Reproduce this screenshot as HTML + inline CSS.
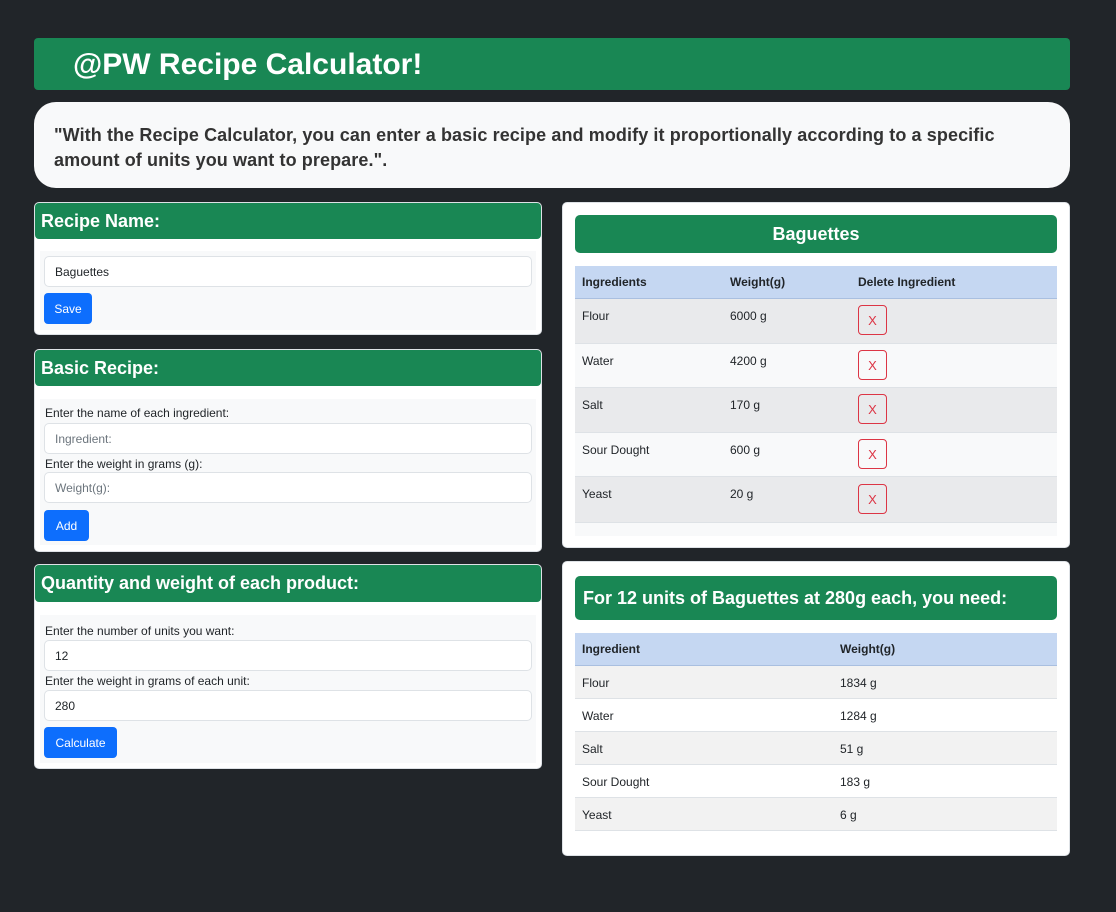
<!DOCTYPE html>
<html><head><meta charset="utf-8"><style>
*{box-sizing:border-box;margin:0;padding:0}
body{width:1116px;height:912px;background:#212529;font-family:"Liberation Sans",sans-serif;color:#212529;position:relative;overflow:hidden}
.a{position:absolute}
.green{background:#198754;color:#fff;font-weight:bold}
.card{position:absolute;background:#fff;border:1px solid #dee2e6;border-radius:5px}
.hdr{position:absolute;left:0;right:0;top:0;border-radius:4px;font-size:18px;padding-left:6px;display:flex;align-items:center}
.body{position:absolute;left:5px;right:5px;background:#f8f9fa}
.inp{position:absolute;left:9px;right:9px;height:31px;background:#fff;border:1px solid #dee2e6;border-radius:5px;font-size:12px;padding-left:10px;display:flex;align-items:center}
.ph{color:#6c757d}
.lbl{position:absolute;left:10px;font-size:12px}
.btn{position:absolute;left:9px;height:31px;background:#0d6efd;color:#fff;border-radius:4px;font-size:12px;display:flex;align-items:center;justify-content:center}
.row{position:absolute;left:12px;right:12px;font-size:12px;border-bottom:1px solid #dee2e6}
.row span{position:absolute}
.th{background:#c5d7f2;font-weight:bold;border-bottom:1px solid #a9bfe0}
.x{position:absolute;width:29px;height:30px;border:1px solid #dc3545;border-radius:4px;color:#dc3545;font-size:13px;display:flex;align-items:center;justify-content:center}
</style></head><body>
<div class="a green" style="left:34px;top:38px;width:1036px;height:52px;border-radius:4px;font-size:30px;padding-left:39px;line-height:54px">@PW Recipe Calculator!</div>
<div class="a" style="left:34px;top:102px;width:1036px;height:86px;border-radius:22px;background:#f8f9fa;font-size:18px;font-weight:bold;color:#333;padding:21px 0 0 20px;line-height:25px;letter-spacing:0.1px">"With the Recipe Calculator, you can enter a basic recipe and modify it proportionally according to a specific<br>amount of units you want to prepare.".</div>

<div class="card" style="left:34px;top:202px;width:508px;height:133px">
 <div class="hdr green" style="height:36px">Recipe Name:</div>
 <div class="body" style="top:48px;height:79px"></div>
 <div class="inp" style="top:53px">Baguettes</div>
 <div class="btn" style="top:90px;width:48px">Save</div>
</div>

<div class="card" style="left:34px;top:349px;width:508px;height:203px">
 <div class="hdr green" style="height:36px">Basic Recipe:</div>
 <div class="body" style="top:49px;height:146px"></div>
 <div class="lbl" style="top:56px">Enter the name of each ingredient:</div>
 <div class="inp ph" style="top:73px">Ingredient:</div>
 <div class="lbl" style="top:107px">Enter the weight in grams (g):</div>
 <div class="inp ph" style="top:122px">Weight(g):</div>
 <div class="btn" style="top:160px;width:45px">Add</div>
</div>

<div class="card" style="left:34px;top:564px;width:508px;height:205px">
 <div class="hdr green" style="height:37px">Quantity and weight of each product:</div>
 <div class="body" style="top:50px;height:148px"></div>
 <div class="lbl" style="top:59px">Enter the number of units you want:</div>
 <div class="inp" style="top:75px">12</div>
 <div class="lbl" style="top:109px">Enter the weight in grams of each unit:</div>
 <div class="inp" style="top:125px">280</div>
 <div class="btn" style="top:162px;width:73px">Calculate</div>
</div>

<div class="card" style="left:562px;top:202px;width:508px;height:346px">
 <div class="a green" style="left:12px;top:12px;width:482px;height:38px;border-radius:5px;font-size:18px;display:flex;align-items:center;justify-content:center">Baguettes</div>
 <div class="a" style="left:12px;top:64px;width:482px;height:269px;background:#f8f9fa"></div>
 <div class="row th" style="top:63px;height:33px"><span style="left:7px;top:9px">Ingredients</span><span style="left:155px;top:9px">Weight(g)</span><span style="left:283px;top:9px">Delete Ingredient</span></div>
 <div class="row" style="top:96px;height:45px;background:#e9eaec"><span style="left:7px;top:10px">Flour</span><span style="left:155px;top:10px">6000 g</span><div class="x" style="left:283px;top:6px">X</div></div>
 <div class="row" style="top:141px;height:44px;background:#f8f9fa"><span style="left:7px;top:10px">Water</span><span style="left:155px;top:10px">4200 g</span><div class="x" style="left:283px;top:6px">X</div></div>
 <div class="row" style="top:185px;height:45px;background:#e9eaec"><span style="left:7px;top:10px">Salt</span><span style="left:155px;top:10px">170 g</span><div class="x" style="left:283px;top:6px">X</div></div>
 <div class="row" style="top:230px;height:44px;background:#f8f9fa"><span style="left:7px;top:10px">Sour Dought</span><span style="left:155px;top:10px">600 g</span><div class="x" style="left:283px;top:6px">X</div></div>
 <div class="row" style="top:274px;height:46px;background:#e9eaec"><span style="left:7px;top:10px">Yeast</span><span style="left:155px;top:10px">20 g</span><div class="x" style="left:283px;top:7px">X</div></div>
</div>

<div class="card" style="left:562px;top:561px;width:508px;height:295px">
 <div class="a green" style="left:12px;top:14px;width:482px;height:44px;border-radius:5px;font-size:18px;padding-left:8px;display:flex;align-items:center">For 12 units of Baguettes at 280g each, you need:</div>
 <div class="row th" style="top:71px;height:33px"><span style="left:7px;top:9px">Ingredient</span><span style="left:265px;top:9px">Weight(g)</span></div>
 <div class="row" style="top:104px;height:33px;background:#f2f2f2"><span style="left:7px;top:10px">Flour</span><span style="left:265px;top:10px">1834 g</span></div>
 <div class="row" style="top:137px;height:33px;background:#fff"><span style="left:7px;top:10px">Water</span><span style="left:265px;top:10px">1284 g</span></div>
 <div class="row" style="top:170px;height:33px;background:#f2f2f2"><span style="left:7px;top:10px">Salt</span><span style="left:265px;top:10px">51 g</span></div>
 <div class="row" style="top:203px;height:33px;background:#fff"><span style="left:7px;top:10px">Sour Dought</span><span style="left:265px;top:10px">183 g</span></div>
 <div class="row" style="top:236px;height:33px;background:#f2f2f2"><span style="left:7px;top:10px">Yeast</span><span style="left:265px;top:10px">6 g</span></div>
</div>
</body></html>
